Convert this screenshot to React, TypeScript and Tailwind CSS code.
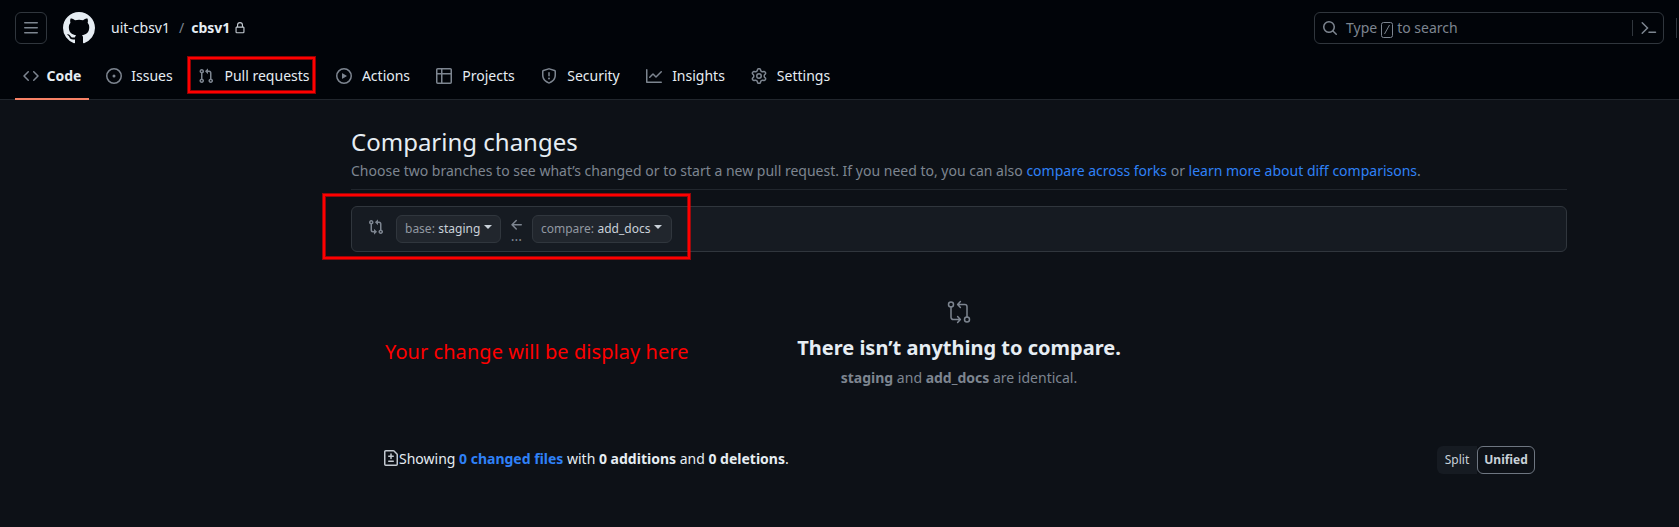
import React from "react";

const paths = {
  menu: "M1 2.75A.75.75 0 0 1 1.75 2h12.5a.75.75 0 0 1 0 1.5H1.75A.75.75 0 0 1 1 2.75Zm0 5A.75.75 0 0 1 1.75 7h12.5a.75.75 0 0 1 0 1.5H1.75A.75.75 0 0 1 1 7.75ZM1.75 12h12.5a.75.75 0 0 1 0 1.5H1.75a.75.75 0 0 1 0-1.5Z",
  mark: "M8 0c4.42 0 8 3.58 8 8a8.013 8.013 0 0 1-5.45 7.59c-.4.08-.55-.17-.55-.38 0-.27.01-1.13.01-2.2 0-.75-.25-1.23-.54-1.48 1.78-.2 3.65-.88 3.65-3.95 0-.88-.31-1.59-.82-2.15.08-.2.36-1.02-.08-2.12 0 0-.67-.22-2.2.82-.64-.18-1.32-.27-2-.27-.68 0-1.36.09-2 .27-1.53-1.03-2.2-.82-2.2-.82-.44 1.1-.16 1.92-.08 2.12-.51.56-.82 1.28-.82 2.15 0 3.06 1.86 3.75 3.64 3.95-.23.2-.44.55-.51 1.07-.46.21-1.61.55-2.33-.66-.15-.24-.6-.83-1.23-.82-.67.01-.27.38.01.53.34.19.73.9.82 1.13.16.45.68 1.31 2.69.94 0 .67.01 1.3.01 1.49 0 .21-.15.45-.55.38A7.995 7.995 0 0 1 0 8c0-4.42 3.58-8 8-8Z",
  lock: "M4 4a4 4 0 0 1 8 0v2h.25c.966 0 1.75.784 1.75 1.75v5.5A1.75 1.75 0 0 1 12.25 15h-8.5A1.75 1.75 0 0 1 2 13.25v-5.5C2 6.784 2.784 6 3.75 6H4Zm8.25 3.5h-8.5a.25.25 0 0 0-.25.25v5.5c0 .138.112.25.25.25h8.5a.25.25 0 0 0 .25-.25v-5.5a.25.25 0 0 0-.25-.25ZM10.5 6V4a2.5 2.5 0 1 0-5 0v2Z",
  search: "M10.68 11.74a6 6 0 0 1-7.922-8.982 6 6 0 0 1 8.982 7.922l3.04 3.04a.749.749 0 0 1-.326 1.275.749.749 0 0 1-.734-.215ZM11.5 7a4.499 4.499 0 1 0-8.997 0A4.499 4.499 0 0 0 11.5 7Z",
  code: "m11.28 3.22 4.25 4.25a.75.75 0 0 1 0 1.06l-4.25 4.25a.749.749 0 0 1-1.275-.326.749.749 0 0 1 .215-.734L13.94 8l-3.72-3.72a.749.749 0 0 1 .326-1.275.749.749 0 0 1 .734.215Zm-6.56 0a.751.751 0 0 1 1.042.018.751.751 0 0 1 .018 1.042L2.06 8l3.72 3.72a.749.749 0 0 1-.326 1.275.749.749 0 0 1-.734-.215L.47 8.53a.75.75 0 0 1 0-1.06Z",
  issue: "M8 9.5a1.5 1.5 0 1 0 0-3 1.5 1.5 0 0 0 0 3Z M8 0a8 8 0 1 1 0 16A8 8 0 0 1 8 0ZM1.5 8a6.5 6.5 0 1 0 13 0 6.5 6.5 0 0 0-13 0Z",
  pull: "M1.5 3.25a2.25 2.25 0 1 1 3 2.122v5.256a2.251 2.251 0 1 1-1.5 0V5.372A2.25 2.25 0 0 1 1.5 3.25Zm5.677-.177L9.573.677A.25.25 0 0 1 10 .854V2.5h1A2.5 2.5 0 0 1 13.5 5v5.628a2.251 2.251 0 1 1-1.5 0V5a1 1 0 0 0-1-1h-1v1.646a.25.25 0 0 1-.427.177L7.177 3.427a.25.25 0 0 1 0-.354ZM3.75 2.5a.75.75 0 1 0 0 1.5.75.75 0 0 0 0-1.5Zm0 9.5a.75.75 0 1 0 0 1.5.75.75 0 0 0 0-1.5Zm8.25.75a.75.75 0 1 0 1.5 0 .75.75 0 0 0-1.5 0Z",
  play: "M8 0a8 8 0 1 1 0 16A8 8 0 0 1 8 0ZM1.5 8a6.5 6.5 0 1 0 13 0 6.5 6.5 0 0 0-13 0Zm4.879-2.773 4.264 2.559a.25.25 0 0 1 0 .428l-4.264 2.559A.25.25 0 0 1 6 10.559V5.442a.25.25 0 0 1 .379-.215Z",
  table: "M0 1.75C0 .784.784 0 1.75 0h12.5C15.216 0 16 .784 16 1.75v12.5A1.75 1.75 0 0 1 14.25 16H1.75A1.75 1.75 0 0 1 0 14.25ZM6.5 6.5v8h7.75a.25.25 0 0 0 .25-.25V6.5Zm8-1.5V1.75a.25.25 0 0 0-.25-.25H6.5V5Zm-13 1.5v7.75c0 .138.112.25.25.25H5v-8ZM5 5V1.5H1.75a.25.25 0 0 0-.25.25V5Z",
  shield: "M7.467.133a1.748 1.748 0 0 1 1.066 0l5.25 1.68A1.75 1.75 0 0 1 15 3.48V7c0 1.566-.32 3.182-1.303 4.682-.983 1.498-2.585 2.813-5.032 3.855a1.697 1.697 0 0 1-1.33 0c-2.447-1.042-4.049-2.357-5.032-3.855C1.32 10.182 1 8.566 1 7V3.48a1.75 1.75 0 0 1 1.217-1.667Zm.61 1.429a.25.25 0 0 0-.153 0l-5.25 1.68a.25.25 0 0 0-.174.238V7c0 1.358.275 2.666 1.057 3.86.784 1.194 2.121 2.34 4.366 3.297a.196.196 0 0 0 .154 0c2.245-.956 3.582-2.104 4.366-3.298C13.225 9.666 13.5 8.36 13.5 7V3.48a.251.251 0 0 0-.174-.237l-5.25-1.68ZM8.75 4.75v3a.75.75 0 0 1-1.5 0v-3a.75.75 0 0 1 1.5 0ZM9 10.5a1 1 0 1 1-2 0 1 1 0 0 1 2 0Z",
  graph: "M1.5 1.75V13.5h13.75a.75.75 0 0 1 0 1.5H.75a.75.75 0 0 1-.75-.75V1.75a.75.75 0 0 1 1.5 0Zm14.28 2.53-5.25 5.25a.75.75 0 0 1-1.06 0L7 7.06 4.28 9.78a.751.751 0 0 1-1.042-.018.751.751 0 0 1-.018-1.042l3.25-3.25a.75.75 0 0 1 1.06 0L10 7.94l4.72-4.72a.751.751 0 0 1 1.042.018.751.751 0 0 1 .018 1.042Z",
  gear: "M8 0a8.2 8.2 0 0 1 .701.031C9.444.095 9.99.645 10.16 1.29l.288 1.107c.018.066.079.158.212.224.231.114.454.243.668.386.123.082.233.09.299.071l1.103-.303c.644-.176 1.392.021 1.82.63.27.385.506.792.704 1.218.315.675.111 1.422-.364 1.891l-.814.806c-.049.048-.098.147-.088.294.016.257.016.515 0 .772-.01.147.038.246.088.294l.814.806c.475.469.679 1.216.364 1.891a7.977 7.977 0 0 1-.704 1.217c-.428.61-1.176.807-1.82.63l-1.102-.302c-.067-.019-.177-.011-.3.071a5.909 5.909 0 0 1-.668.386c-.133.066-.194.158-.211.224l-.29 1.106c-.168.646-.715 1.196-1.458 1.26a8.006 8.006 0 0 1-1.402 0c-.743-.064-1.289-.614-1.458-1.26l-.289-1.106c-.018-.066-.079-.158-.212-.224a5.738 5.738 0 0 1-.668-.386c-.123-.082-.233-.09-.299-.071l-1.103.303c-.644.176-1.392-.021-1.82-.63a8.12 8.12 0 0 1-.704-1.218c-.315-.675-.111-1.422.363-1.891l.815-.806c.05-.048.098-.147.088-.294a6.214 6.214 0 0 1 0-.772c.01-.147-.038-.246-.088-.294l-.815-.806C.635 6.045.431 5.298.746 4.623a7.92 7.92 0 0 1 .704-1.217c.428-.61 1.176-.807 1.82-.63l1.102.302c.067.019.177.011.3-.071.214-.143.437-.272.668-.386.133-.066.194-.158.211-.224l.29-1.106C6.009.645 6.556.095 7.299.03 7.53.01 7.764 0 8 0Zm-.571 1.525c-.036.003-.108.036-.137.146l-.289 1.105c-.147.561-.549.967-.998 1.189-.173.086-.34.183-.5.29-.417.278-.97.423-1.529.27l-1.103-.303c-.109-.03-.175.016-.195.045-.22.312-.412.644-.573.99-.014.031-.021.11.059.19l.815.806c.411.406.562.957.53 1.456a4.709 4.709 0 0 0 0 .582c.032.499-.119 1.05-.53 1.456l-.815.806c-.081.08-.073.159-.059.19.162.346.353.677.573.989.02.03.085.076.195.046l1.102-.303c.56-.153 1.113-.008 1.53.27.161.107.328.204.501.29.447.222.85.629.997 1.189l.289 1.105c.029.109.101.143.137.146a6.6 6.6 0 0 0 1.142 0c.036-.003.108-.036.137-.146l.289-1.105c.147-.561.549-.967.998-1.189.173-.086.34-.183.5-.29.417-.278.97-.423 1.529-.27l1.103.303c.109.029.175-.016.195-.045.22-.313.411-.644.573-.99.014-.031.021-.11-.059-.19l-.815-.806c-.411-.406-.562-.957-.53-1.456a4.709 4.709 0 0 0 0-.582c-.032-.499.119-1.05.53-1.456l.815-.806c.081-.08.073-.159.059-.19a6.464 6.464 0 0 0-.573-.989c-.02-.03-.085-.076-.195-.046l-1.102.303c-.56.153-1.113.008-1.53-.27a4.44 4.44 0 0 0-.501-.29c-.447-.222-.85-.629-.997-1.189l-.289-1.105c-.029-.11-.101-.143-.137-.146a6.6 6.6 0 0 0-1.142 0ZM11 8a3 3 0 1 1-6 0 3 3 0 0 1 6 0ZM9.5 8a1.5 1.5 0 1 0-3.001.001A1.5 1.5 0 0 0 9.5 8Z",
  compare: "M9.573.677A.25.25 0 0 1 10 .854V2.5h1A2.5 2.5 0 0 1 13.5 5v5.628a2.251 2.251 0 1 1-1.5 0V5a1 1 0 0 0-1-1h-1v1.646a.25.25 0 0 1-.427.177L7.177 3.427a.25.25 0 0 1 0-.354ZM6 12v-1.646a.25.25 0 0 1 .427-.177l2.396 2.396a.25.25 0 0 1 0 .354l-2.396 2.396A.25.25 0 0 1 6 15.146V13.5H5A2.5 2.5 0 0 1 2.5 11V5.372a2.25 2.25 0 1 1 1.5 0V11a1 1 0 0 0 1 1ZM4 3.25a.75.75 0 1 0-1.5 0 .75.75 0 0 0 1.5 0ZM12.75 12a.75.75 0 1 0 0 1.5.75.75 0 0 0 0-1.5Z",
  arrow: "M7.78 12.53a.75.75 0 0 1-1.06 0L2.47 8.28a.75.75 0 0 1 0-1.06l4.25-4.25a.751.751 0 0 1 1.042.018.751.751 0 0 1 .018 1.042L4.81 7h7.44a.75.75 0 0 1 0 1.5H4.81l2.97 2.97a.75.75 0 0 1 0 1.06Z",
  diff: "M1 1.75C1 .784 1.784 0 2.75 0h7.586c.464 0 .909.184 1.237.513l2.914 2.914c.329.328.513.773.513 1.237v9.586A1.75 1.75 0 0 1 13.25 16H2.75A1.75 1.75 0 0 1 1 14.25Zm1.75-.25a.25.25 0 0 0-.25.25v12.5c0 .138.112.25.25.25h10.5a.25.25 0 0 0 .25-.25V4.664a.25.25 0 0 0-.073-.177l-2.914-2.914a.25.25 0 0 0-.177-.073ZM8 3.25a.75.75 0 0 1 .75.75v1.5h1.5a.75.75 0 0 1 0 1.5h-1.5v1.5a.75.75 0 0 1-1.5 0V7h-1.5a.75.75 0 0 1 0-1.5h1.5V4A.75.75 0 0 1 8 3.25Zm-3 8a.75.75 0 0 1 .75-.75h4.5a.75.75 0 0 1 0 1.5h-4.5a.75.75 0 0 1-.75-.75Z",
};

type IconName = keyof typeof paths;

function Icon({ name, className = "size-4" }: { name: IconName; className?: string }) {
  return (
    <svg viewBox="0 0 16 16" fill="currentColor" className={`shrink-0 ${className}`} aria-hidden="true">
      <path d={paths[name]} />
    </svg>
  );
}

function CompareLarge() {
  return (
    <svg viewBox="0 0 24 24" fill="none" stroke="currentColor" strokeWidth="1.5" strokeLinecap="round" strokeLinejoin="round" className="size-6">
      <circle cx="4" cy="4.500" r="2.5" />
      <circle cx="20" cy="19.500" r="2.5" />
      <path d="M4 7v10.300a2.200 2.200 0 0 0 2.200 2.200H13M10.600 16.500l2.800 3-2.800 3M20 17V6.700a2.200 2.200 0 0 0-2.200-2.200H11M13.400 1.500 10.600 4.500l2.800 3" />
    </svg>
  );
}

const tabs: { label: string; icon: IconName; width: string }[] = [
  { label: "Code", icon: "code", width: "w-[34px]" },
  { label: "Issues", icon: "issue", width: "w-[44px]" },
  { label: "Pull requests", icon: "pull", width: "w-[90px]" },
  { label: "Actions", icon: "play", width: "w-[52px]" },
  { label: "Projects", icon: "table", width: "w-[57px]" },
  { label: "Security", icon: "shield", width: "w-[57px]" },
  { label: "Insights", icon: "graph", width: "w-[57px]" },
  { label: "Settings", icon: "gear", width: "w-[57px]" },
];

function Header() {
  return (
    <header className="h-[100px] border-b border-[#21262d] bg-[#010409]">
      <div className="flex h-14 items-center pl-[15px]">
        <button className="flex size-8 items-center justify-center rounded-md border border-[#30363d] text-[#7d8590]">
          <Icon name="menu" />
        </button>
        <Icon name="mark" className="ml-4 size-8 text-[#e6edf3]" />
        <div className="ml-4 flex items-center pb-[2px]">
          <span>uit-cbsv1</span>
          <span className="mr-2 ml-[9px] text-[#7d8590]">/</span>
          <span className="-ml-px font-bold">cbsv1</span>
          <Icon name="lock" className="mt-px ml-1 size-3 text-[#c3cad1]" />
        </div>
        <div className="ml-auto flex h-8 w-[350px] items-center rounded-md border border-[#30363d] pl-[7px] text-[#7d8590]">
          <Icon name="search" />
          <span className="ml-2 pb-[2px]">Type</span>
          <svg viewBox="0 0 12 16" fill="none" stroke="currentColor" className="mt-1 ml-1 h-4 w-3">
            <rect x=".5" y=".5" width="11" height="15" rx="2" />
            <path d="M8.500 3 3.500 12" />
          </svg>
          <span className="ml-1 pb-[2px]">to search</span>
          <span className="ml-auto h-4 w-px bg-[#30363d]" />
          <svg viewBox="0 0 16 16" fill="none" stroke="currentColor" strokeWidth="1.5" strokeLinecap="round" className="mr-[6px] ml-2 size-4">
            <path d="M1.200 2.700 6.500 8l-5.300 5.300M8 12.300h6.500" />
          </svg>
        </div>
        <span className="mr-0.5 ml-3 h-5 w-px bg-[#30363d]" />
      </div>
      <nav className="flex h-11 gap-2 pl-[15px]">
        {tabs.map((t, i) => (
          <a key={t.label} className={`flex h-11 items-center gap-2 border-b-2 px-2 pb-[2px] ${i === 0 ? "mr-px border-[#f78166] font-bold" : "border-transparent"}`}>
            <Icon name={t.icon} className="size-4 text-[#7d8590]" />
            <span className={`flex justify-center pb-[2px] whitespace-nowrap ${t.width}`}>{t.label}</span>
          </a>
        ))}
      </nav>
    </header>
  );
}

function Branch({ kind, name, width }: { kind: string; name: string; width: string }) {
  return (
    <button className={`flex h-7 items-center rounded-md border border-[#30363d] bg-[#21262d] pl-2 text-xs text-[#c9d1d9] ${width}`}>
      <span className="text-[#9198a1]">{kind}:</span>
      <span className="ml-[3.4px]">{name}</span>
      <span className="-mt-1 ml-1 border-x-4 border-t-4 border-x-transparent border-t-[#c9d1d9]" />
    </button>
  );
}

export default function App() {
  return (
    <div className="relative h-[527px] w-[1679px] overflow-hidden bg-[#0d1117] font-['Noto_Sans',sans-serif] text-sm leading-[21px] text-[#e6edf3]">
      <Header />
      <main className="ml-[351px] w-[1216px] pt-6">
        <div className="h-[66px] border-b border-[#21262d]">
          <h1 className="text-2xl leading-9">Comparing changes</h1>
          <p className="text-[#7d8590]">
            Choose two branches to see what’s changed or to start a new pull request. If you need to, you can also{" "}
            <a className="text-[#2f81f7]">compare across forks</a> or <a className="text-[#2f81f7]">learn more about diff comparisons</a>.
          </p>
        </div>
        <div className="mt-4 flex h-[46px] items-center rounded-md border border-[#30363d] bg-[#161b22] pl-4">
          <Icon name="compare" className="-mt-[5px] size-4 text-[#7d8590]" />
          <div className="ml-3 flex items-center">
            <Branch kind="base" name="staging" width="w-[105px]" />
            <div className="flex w-[31px] flex-col items-center text-[#7d8590]">
              <Icon name="arrow" />
              <span className="-mt-[3px] h-[11px] text-sm leading-[11px]">...</span>
            </div>
            <Branch kind="compare" name="add_docs" width="w-[140px]" />
          </div>
        </div>
        <section className="mt-12 flex h-[92px] flex-col items-center text-[#7d8590]">
          <CompareLarge />
          <h3 className="mt-[9px] text-xl leading-[30px] font-bold text-[#e6edf3]">There isn’t anything to compare.</h3>
          <p className="mt-1">
            <b>staging</b> and <b>add_docs</b> are identical.
          </p>
        </section>
        <div className="mt-[54px] flex h-7 items-center pr-8 pl-8">
          <Icon name="diff" className="-mt-1 size-4 text-[#c3cad1]" />
          <p className="-mt-[3px]">
            Showing <b className="text-[#2f81f7]">0 changed files</b> with <b>0 additions</b> and <b>0 deletions</b>.
          </p>
          <div className="ml-auto flex h-7 text-xs text-[#c9d1d9]">
            <button className="w-10 rounded-l-md bg-[#161b22]">Split</button>
            <button className="w-[58px] rounded-md border border-[#6e7681] font-bold">Unified</button>
          </div>
        </div>
      </main>
      <div className="absolute top-[57px] left-[188px] h-[36px] w-[127px] border-2 border-[#f00] shadow-[0_0_0_1px_#ff000090,inset_0_0_0_1px_#ff000090]" />
      <div className="absolute top-[194px] left-[323px] h-[65px] w-[367px] border-2 border-[#f00] shadow-[0_0_0_1px_#ff000090,inset_0_0_0_1px_#ff000090]" />
      <p className="absolute top-[337px] left-[385px] text-xl leading-[30px] tracking-[0.06px] whitespace-nowrap text-[#f00]">Your change will be display here</p>
    </div>
  );
}
